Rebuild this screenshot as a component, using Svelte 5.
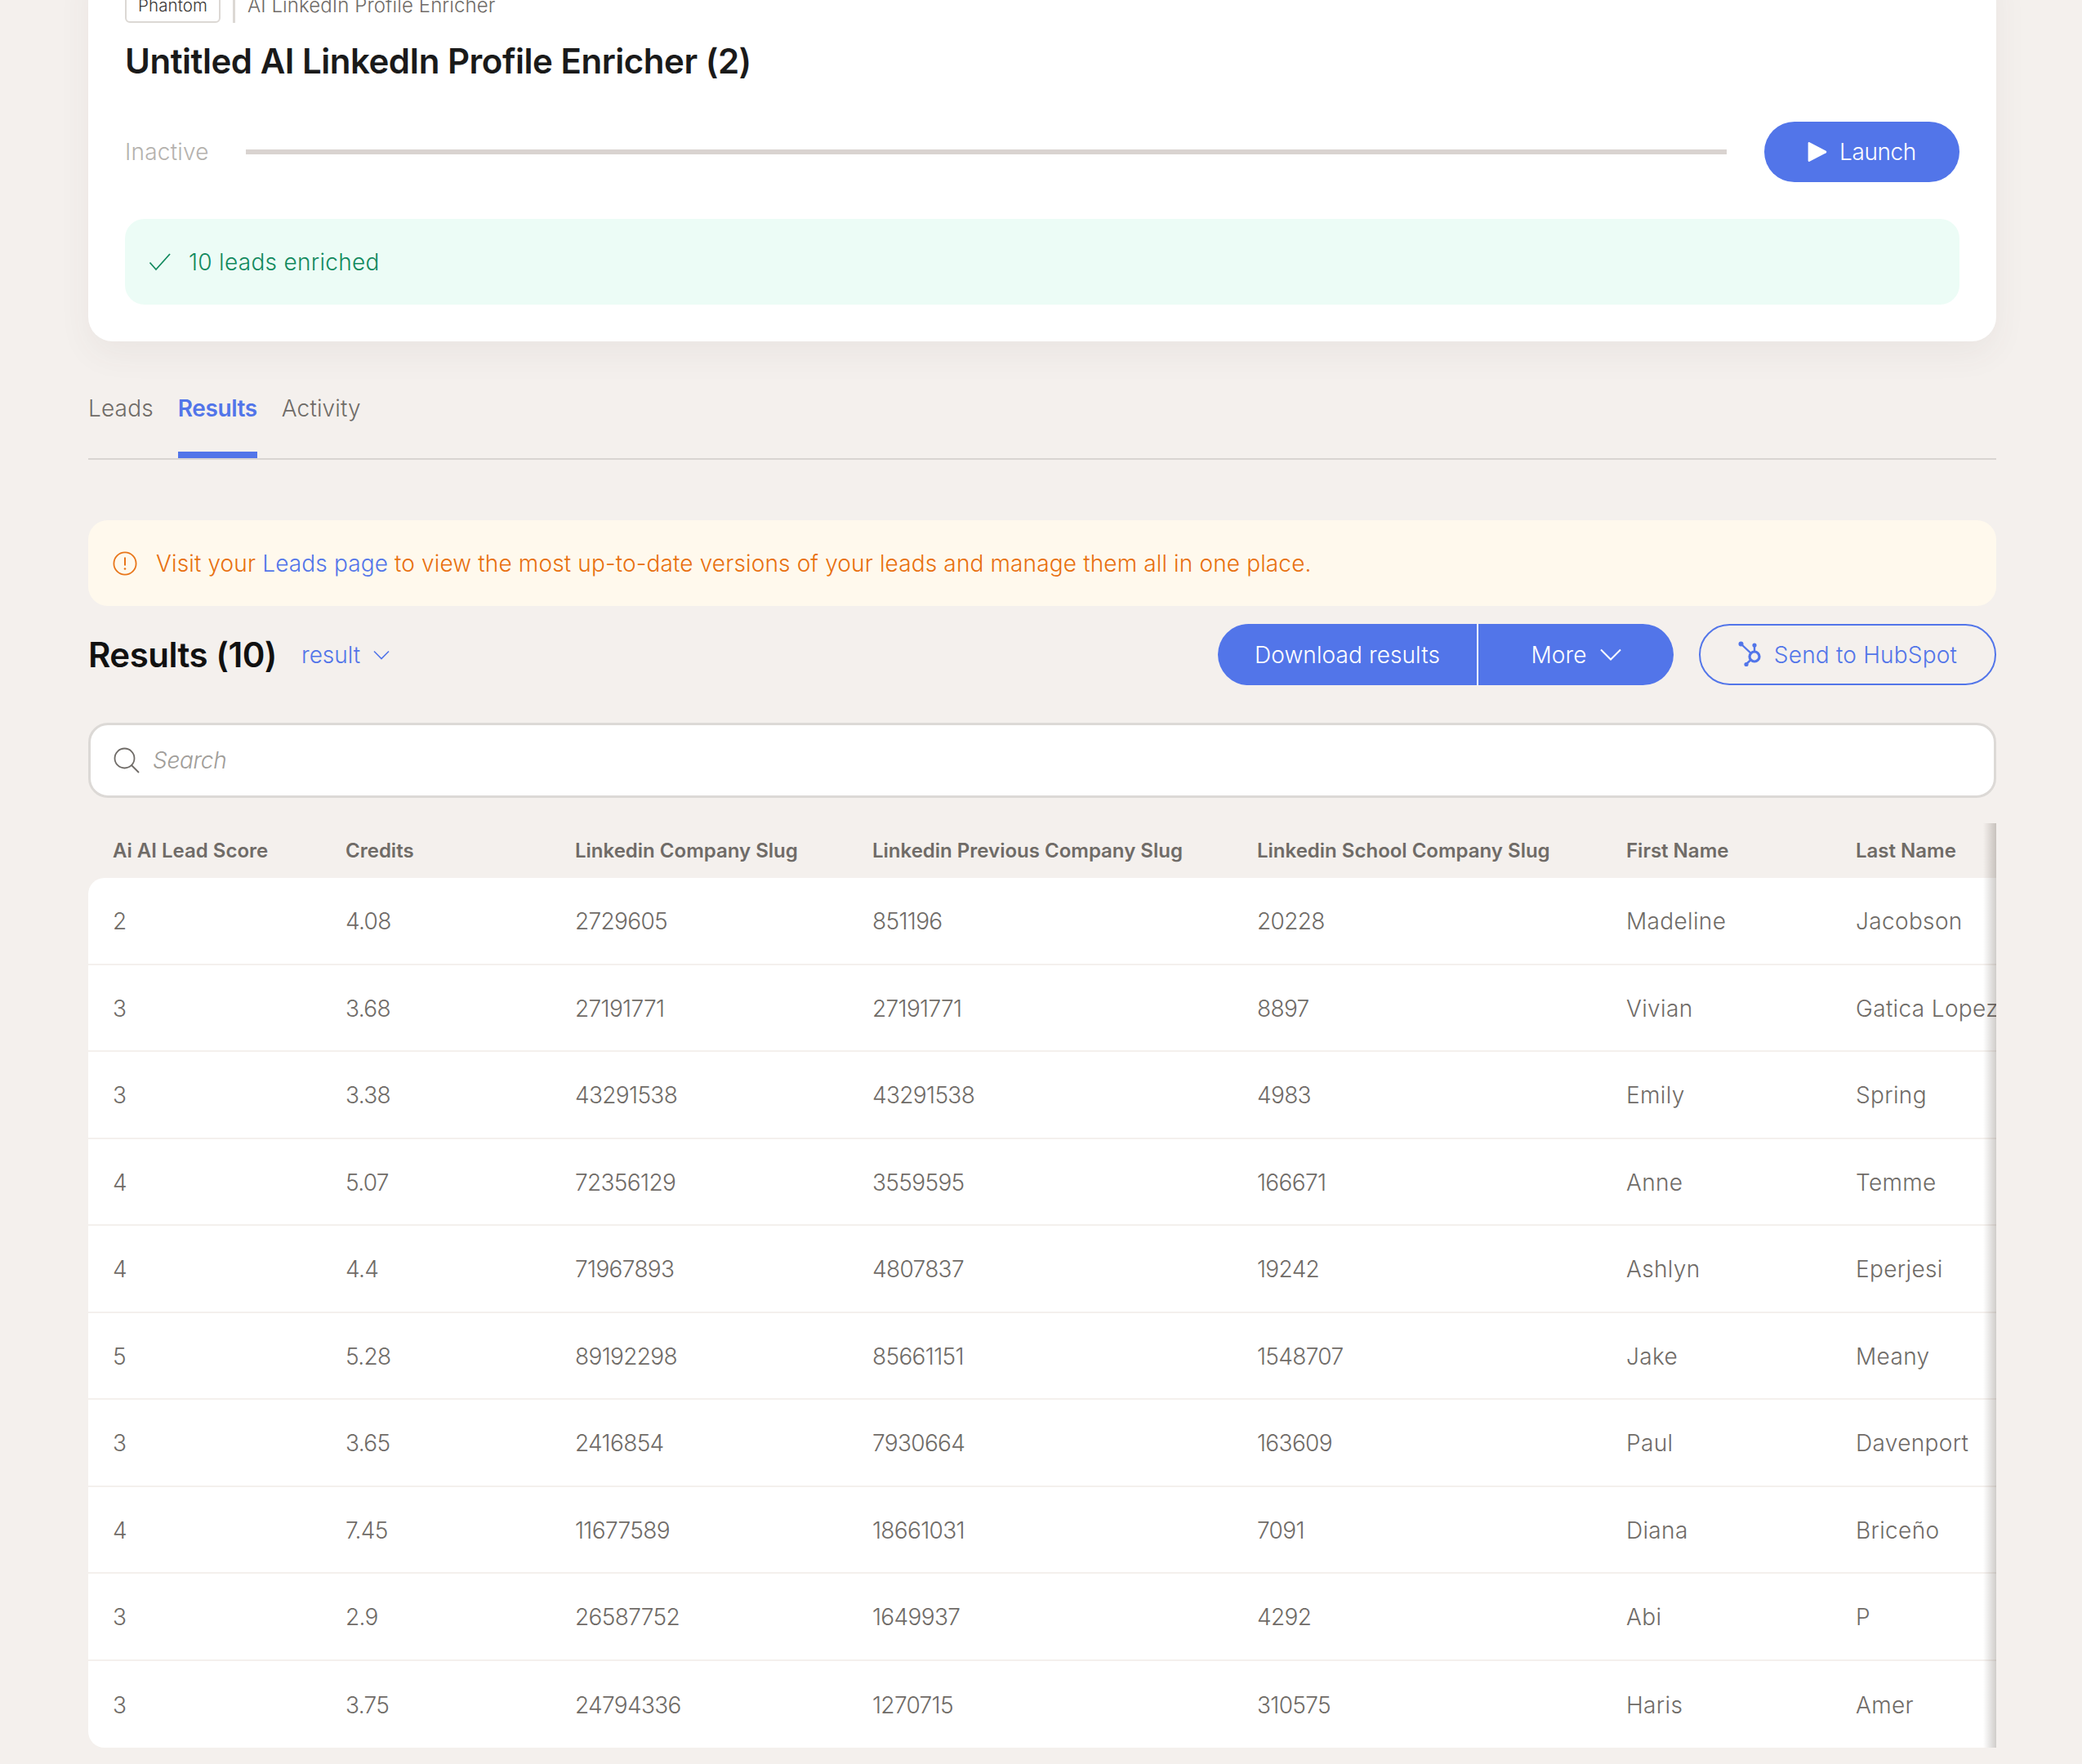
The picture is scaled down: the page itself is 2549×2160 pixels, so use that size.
<script>
  const rows = [
    ['2', '4.08', '2729605', '851196', '20228', 'Madeline', 'Jacobson'],
    ['3', '3.68', '27191771', '27191771', '8897', 'Vivian', 'Gatica Lopez'],
    ['3', '3.38', '43291538', '43291538', '4983', 'Emily', 'Spring'],
    ['4', '5.07', '72356129', '3559595', '166671', 'Anne', 'Temme'],
    ['4', '4.4', '71967893', '4807837', '19242', 'Ashlyn', 'Eperjesi'],
    ['5', '5.28', '89192298', '85661151', '1548707', 'Jake', 'Meany'],
    ['3', '3.65', '2416854', '7930664', '163609', 'Paul', 'Davenport'],
    ['4', '7.45', '11677589', '18661031', '7091', 'Diana', 'Briceño'],
    ['3', '2.9', '26587752', '1649937', '4292', 'Abi', 'P'],
    ['3', '3.75', '24794336', '1270715', '310575', 'Haris', 'Amer']
  ]
  const columns = [
    'Ai AI Lead Score',
    'Credits',
    'Linkedin Company Slug',
    'Linkedin Previous Company Slug',
    'Linkedin School Company Slug',
    'First Name',
    'Last Name'
  ]
</script>

<div class="page">
  <section class="card">
    <div class="crumbs">
      <span class="badge">Phantom</span>
      <span class="divider"></span>
      <span class="kind">AI LinkedIn Profile Enricher</span>
    </div>
    <h1>Untitled AI LinkedIn Profile Enricher (2)</h1>
    <div class="status">
      <span class="inactive">Inactive</span>
      <div class="track"></div>
      <button class="launch">
        <svg width="24" height="26" viewBox="0 0 24 26"><path d="M2.5 1.2 22.6 11.8a1.4 1.4 0 0 1 0 2.4L2.5 24.8A1.4 1.4 0 0 1 .6 23.5V2.5A1.4 1.4 0 0 1 2.5 1.2Z" fill="#fff"/></svg>
        Launch
      </button>
    </div>
    <div class="success">
      <svg width="28" height="24" viewBox="0 0 28 24"><path d="M1.5 12.5 9 21 26 2" fill="none" stroke="#128a5e" stroke-width="1.8"/></svg>
      10 leads enriched
    </div>
  </section>

  <nav class="tabs">
    <span class="tab">Leads</span>
    <span class="tab active">Results</span>
    <span class="tab">Activity</span>
  </nav>

  <div class="notice">
    <svg width="30" height="30" viewBox="0 0 30 30"><circle cx="15" cy="15" r="13.6" fill="none" stroke="#e8761a" stroke-width="1.8"/><path d="M15 7.5v10" stroke="#e8761a" stroke-width="2"/><circle cx="15" cy="21.5" r="1.3" fill="#e8761a"/></svg>
    <p>Visit your <a href="#leads">Leads page</a> to view the most up-to-date versions of your leads and manage them all in one place.</p>
  </div>

  <div class="heading">
    <h2>Results (10)</h2>
    <span class="picker">
      result
      <svg width="20" height="12" viewBox="0 0 20 12"><path d="M1 1.5 10 10.5 19 1.5" fill="none" stroke="#5275e9" stroke-width="1.6"/></svg>
    </span>
    <div class="actions">
      <div class="split">
        <button class="download">Download results</button>
        <button class="more">
          More
          <svg width="26" height="15" viewBox="0 0 26 15"><path d="M1 1.5 13 13.5 25 1.5" fill="none" stroke="#fff" stroke-width="2"/></svg>
        </button>
      </div>
      <button class="hubspot">
        <svg width="30" height="36" viewBox="0 0 30 36">
          <path d="M3.5 4.5 20 20M20 6v14M20 20 10 29" fill="none" stroke="#5275e9" stroke-width="2.4"/>
          <circle cx="3.5" cy="4.5" r="3" fill="#5275e9"/>
          <circle cx="20" cy="6" r="2.6" fill="#5275e9"/>
          <circle cx="10" cy="29.5" r="2.6" fill="#5275e9"/>
          <circle cx="20" cy="20" r="6" fill="#f4f0ed" stroke="#5275e9" stroke-width="3.2"/>
        </svg>
        Send to HubSpot
      </button>
    </div>
  </div>

  <div class="search">
    <svg width="32" height="32" viewBox="0 0 32 32"><circle cx="13.5" cy="13.5" r="12" fill="none" stroke="#6f6b67" stroke-width="1.8"/><path d="M22 22 31 31" stroke="#6f6b67" stroke-width="1.8"/></svg>
    <span>Search</span>
  </div>

  <div class="results">
    <div class="head row">
      {#each columns as col}
        <span>{col}</span>
      {/each}
    </div>
    <div class="body">
      {#each rows as row}
        <div class="row line">
          {#each row as cell}
            <span>{cell}</span>
          {/each}
        </div>
      {/each}
    </div>
    <div class="edge"></div>
  </div>
</div>

<style>
  :global(body) {
    background: #f4f0ed;
    font-family: Inter, 'Noto Sans', sans-serif;
    font-weight: 350;
  }

  button {
    font: inherit;
    cursor: pointer;
    border: none;
  }

  .page {
    margin-top: -60px;
    padding: 0 105px 20px 108px;
    overflow: hidden;
  }

  .card {
    background: #fff;
    border-radius: 30px;
    padding: 45px;
    box-shadow: 0 16px 40px rgba(90, 70, 60, 0.06);
  }

  .crumbs {
    display: flex;
    align-items: stretch;
    height: 43px;
    font-size: 24px;
    letter-spacing: 0.1px;
    color: #6f6b67;
  }

  .badge {
    display: flex;
    align-items: center;
    padding: 0 14px;
    border: 2px solid #dcd8d4;
    border-radius: 6px;
    font-size: 20.5px;
    color: #3a3836;
  }

  .divider {
    width: 3px;
    background: #dcd8d4;
    margin: 0 15px;
  }

  .kind {
    display: flex;
    align-items: center;
  }

  h1 {
    margin: 22px 0 -2px;
    font-size: 42px;
    line-height: 50px;
    font-weight: 600;
    letter-spacing: -0.48px;
    color: #1a1a1a;
  }

  .status {
    display: flex;
    align-items: center;
    margin-top: 51px;
  }

  .inactive {
    width: 148px;
    font-size: 28px;
    letter-spacing: 0.2px;
    color: #b5b2ae;
  }

  .track {
    flex: 1;
    height: 6px;
    background: #d9d3d0;
  }

  .launch {
    display: flex;
    align-items: center;
    justify-content: center;
    gap: 15px;
    width: 239px;
    height: 74px;
    margin-left: 46px;
    border-radius: 37px;
    background: #5275e9;
    color: #fff;
    font-size: 28px;
    letter-spacing: -0.4px;
  }

  .success {
    display: flex;
    align-items: center;
    gap: 21px;
    height: 105px;
    margin-top: 45px;
    padding: 0 29px;
    border-radius: 24px;
    background: #ecfcf6;
    color: #128a5e;
    font-size: 28px;
    letter-spacing: 0.3px;
  }

  .tabs {
    display: flex;
    gap: 30px;
    margin-top: 60px;
    border-bottom: 2px solid #d9d5d2;
    font-size: 28px;
    letter-spacing: 0.15px;
    color: #6f6b67;
  }

  .tab {
    height: 75px;
    line-height: 44px;
    border-bottom: 8px solid transparent;
  }

  .active {
    color: #5275e9;
    font-weight: 600;
    letter-spacing: -0.4px;
    border-bottom-color: #5275e9;
  }

  .notice {
    display: flex;
    align-items: center;
    gap: 23px;
    height: 105px;
    margin-top: 74px;
    padding: 0 30px;
    border-radius: 24px;
    background: #fff9ed;
    color: #e8700f;
    font-size: 28px;
    letter-spacing: 0.14px;
  }

  .notice p {
    margin: 0;
  }

  .notice a {
    color: #5275e9;
    text-decoration: none;
  }

  .heading {
    display: flex;
    align-items: center;
    height: 75px;
    margin-top: 22px;
  }

  h2 {
    margin: 0;
    font-size: 42px;
    font-weight: 600;
    letter-spacing: -0.5px;
    color: #111;
  }

  .picker {
    display: flex;
    align-items: center;
    gap: 16px;
    margin-left: 30px;
    font-size: 28px;
    color: #5275e9;
  }

  .actions {
    display: flex;
    gap: 31px;
    margin-left: auto;
  }

  .split {
    display: flex;
    gap: 2px;
    background: #fff;
    border-radius: 38px;
    overflow: hidden;
  }

  .split button {
    height: 75px;
    background: #5275e9;
    color: #fff;
    font-size: 28px;
    letter-spacing: 0.1px;
  }

  .download {
    width: 317px;
  }

  .more {
    display: flex;
    align-items: center;
    justify-content: center;
    gap: 16px;
    width: 239px;
  }

  .hubspot {
    display: flex;
    align-items: center;
    justify-content: center;
    gap: 14px;
    width: 364px;
    height: 75px;
    border: 2px solid #5275e9;
    border-radius: 38px;
    background: transparent;
    color: #5275e9;
    font-size: 28px;
    letter-spacing: 0.2px;
  }

  .search {
    display: flex;
    align-items: center;
    gap: 16px;
    height: 92px;
    margin-top: 46px;
    padding: 0 28px;
    box-sizing: border-box;
    background: #fff;
    border: 3px solid #dcd9d6;
    border-radius: 24px;
    font-size: 28px;
    font-style: italic;
    letter-spacing: -0.3px;
    color: #a09d99;
  }

  .results {
    position: relative;
    margin-top: 31px;
    overflow: hidden;
    color: #6f6b67;
  }

  .row {
    display: grid;
    grid-template-columns: 285px 281px 364px 471px 452px 281px 1fr;
    padding-left: 30px;
    align-items: center;
    white-space: nowrap;
    font-size: 28px;
    letter-spacing: 0.35px;
  }

  .head {
    height: 67px;
    font-size: 24px;
    font-weight: 600;
    letter-spacing: 0;
  }

  .body {
    background: #fff;
    border-radius: 20px 0 0 20px;
  }

  .line {
    height: 106.5px;
    box-sizing: border-box;
    padding-top: 2px;
    border-bottom: 2px solid #f4f0ed;
  }

  .line span:nth-child(-n + 5) {
    letter-spacing: -0.65px;
  }

  .line:last-child {
    border-bottom: none;
  }

  .edge {
    position: absolute;
    top: 0;
    right: 0;
    bottom: 0;
    width: 16px;
    background: linear-gradient(to right, rgba(80, 70, 60, 0), rgba(80, 70, 60, 0.27));
  }
</style>
